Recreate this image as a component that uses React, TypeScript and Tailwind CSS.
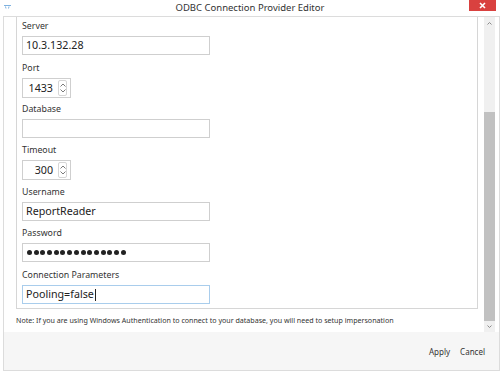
import React from "react";

const FONT = { fontFamily: '"Noto Sans", "Open Sans", sans-serif' };

type Field =
    | { label: string; kind: "text"; value: string; focused?: boolean; h: string }
    | { label: string; kind: "spin"; value: string; h: string }
    | { label: string; kind: "password"; count: number; h: string };

const FIELDS: Field[] = [
    { label: "Server", kind: "text", value: "10.3.132.28", h: "h-[42px]" },
    { label: "Port", kind: "spin", value: "1433", h: "h-[41px]" },
    { label: "Database", kind: "text", value: "", h: "h-[41px]" },
    { label: "Timeout", kind: "spin", value: "300", h: "h-[42px]" },
    { label: "Username", kind: "text", value: "ReportReader", h: "h-[41px]" },
    { label: "Password", kind: "password", count: 15, h: "h-[42px]" },
    { label: "Connection Parameters", kind: "text", value: "Pooling=false", focused: true, h: "h-[40px]" },
];

function Spinner() {
    return (
        <div className="my-[1px] mr-[3px] flex w-[9px] flex-col items-center justify-between rounded-[2px] border border-[#d6d6d6] py-[2px]">
            <svg width="6" height="4" viewBox="0 0 6 4">
                <path d="M0.5 3.5 L3 1 L5.5 3.5" fill="none" stroke="#7a7a7a" strokeWidth="1" />
            </svg>
            <svg width="6" height="4" viewBox="0 0 6 4">
                <path d="M0.5 0.5 L3 3 L5.5 0.5" fill="none" stroke="#7a7a7a" strokeWidth="1" />
            </svg>
        </div>
    );
}

function FieldRow({ field }: { field: Field }) {
    return (
        <div className={`${field.h} flex flex-col`}>
            <div className="h-[14px] text-[8.8px] leading-[14px] text-[#333]">{field.label}</div>
            {field.kind === "text" && (
                <div
                    className={`mt-[3px] flex h-[19px] w-[188px] items-center border px-[3px] text-[10.7px] text-[#222] ${
                        field.focused ? "border-[#a9cdec]" : "border-[#cfcfcf]"
                    }`}
                >
                    {field.value}
                    {field.focused && <span className="ml-[1px] h-[12px] w-px bg-[#222]" />}
                </div>
            )}
            {field.kind === "spin" && (
                <div className="mt-[3px] flex h-[20px] w-[49px] items-stretch border border-[#cfcfcf]">
                    <div className="flex flex-1 items-center justify-end pr-[5px] text-[10.7px] text-[#222]">
                        {field.value}
                    </div>
                    <Spinner />
                </div>
            )}
            {field.kind === "password" && (
                <div className="mt-[3px] flex h-[19px] w-[188px] items-center gap-[1.7px] border border-[#cfcfcf] px-[4px]">
                    {Array.from({ length: field.count }).map((_, i) => (
                        <span key={i} className="h-[5px] w-[5px] rounded-full bg-[#222]" />
                    ))}
                </div>
            )}
        </div>
    );
}

export default function App() {
    return (
        <div className="relative h-[374px] w-[500px] overflow-hidden bg-white" style={FONT}>
            {/* title bar */}
            <div className="relative flex h-[16px] items-center justify-center">
                <svg className="absolute left-[4px] top-[5px]" width="7" height="4" viewBox="0 0 7 4">
                    <path d="M0 0.5 H7" stroke="#7fb2e0" strokeWidth="1" />
                    <path d="M1.5 1.5 L2 3.5 M5 1.5 L4.5 3.5" stroke="#7fb2e0" strokeWidth="1" />
                </svg>
                <span className="text-[9.5px] leading-none text-[#333]">ODBC Connection Provider Editor</span>
                <div className="absolute right-[4px] top-0 flex h-[11px] w-[27px] items-center justify-center bg-[#d9413f]">
                    <svg width="7" height="7" viewBox="0 0 7 7">
                        <path d="M1 1 L6 6 M6 1 L1 6" stroke="#fff" strokeWidth="1.6" />
                    </svg>
                </div>
            </div>

            {/* window body */}
            <div className="ml-[3px] flex h-[355px] w-[497px] flex-col border border-[#dcdcdc]">
                <div className="flex h-[315px]">
                    <div className="flex flex-col pl-[12px]">
                        <div className="h-[292px] w-[462px] border-x border-b border-[#d6d6d6] pl-[5px] pt-[2px]">
                            {FIELDS.map((f) => (
                                <FieldRow key={f.label} field={f} />
                            ))}
                        </div>
                        <div className="flex h-[23px] items-center text-[7.1px] text-[#333]">
                            Note: If you are using Windows Authentication to connect to your database, you will need
                            to setup impersonation
                        </div>
                    </div>
                    {/* scrollbar */}
                    <div className="ml-[6px] flex w-[11px] flex-col bg-[#f0f0f0]">
                        <div className="flex h-[12px] items-center justify-center">
                            <svg width="5" height="3" viewBox="0 0 5 3">
                                <path d="M0.5 2.5 L2.5 0.5 L4.5 2.5" fill="none" stroke="#8a8a8a" strokeWidth="1" />
                            </svg>
                        </div>
                        <div className="flex-1 pt-[83px]">
                            <div className="h-full bg-[#c1c1c1]" />
                        </div>
                        <div className="flex h-[11px] items-center justify-center">
                            <svg width="5" height="3" viewBox="0 0 5 3">
                                <path d="M0.5 0.5 L2.5 2.5 L4.5 0.5" fill="none" stroke="#8a8a8a" strokeWidth="1" />
                            </svg>
                        </div>
                    </div>
                </div>

                {/* footer */}
                <div className="flex flex-1 items-center justify-end gap-[10px] bg-[#f6f6f6] pr-[14px] pt-[2px] text-[8px] text-[#333]">
                    <span>Apply</span>
                    <span>Cancel</span>
                </div>
            </div>
        </div>
    );
}
